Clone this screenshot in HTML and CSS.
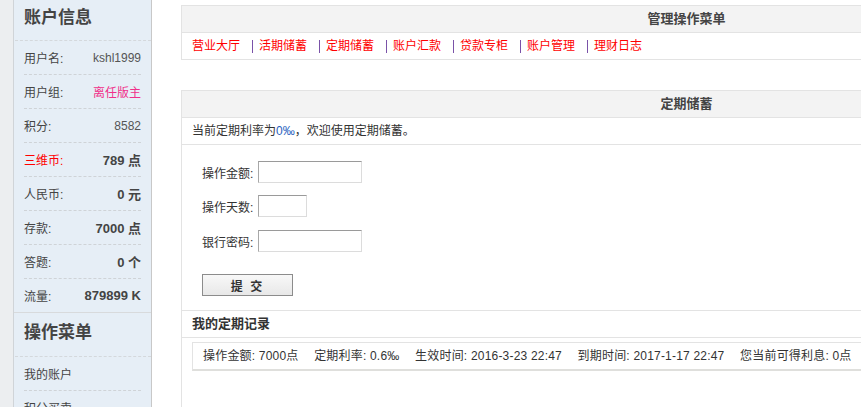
FILE: index.html
```html
<!DOCTYPE html>
<html lang="zh-CN">
<head>
    <meta charset="UTF-8">
    <title>定期储蓄</title>
    <link rel="stylesheet" href="styles.css">
</head>
<body>
    <div class="page">
        <div class="strip"></div>

        <aside class="sidebar">
            <div class="section">
                <h3>账户信息</h3>
                <ul class="info">
                    <li><span>用户名:</span><span class="val">kshl1999</span></li>
                    <li><span>用户组:</span><span class="val pink">离任版主</span></li>
                    <li><span>积分:</span><span class="val">8582</span></li>
                    <li><span class="red">三维币:</span><b>789 点</b></li>
                    <li><span>人民币:</span><b>0 元</b></li>
                    <li><span>存款:</span><b>7000 点</b></li>
                    <li><span>答题:</span><b>0 个</b></li>
                    <li><span>流量:</span><b>879899 K</b></li>
                </ul>
            </div>
            <div class="section second">
                <h3>操作菜单</h3>
                <ul class="info menu">
                    <li><span>我的账户</span></li>
                    <li><span>积分买卖</span></li>
                </ul>
            </div>
        </aside>

        <main class="main">
            <div class="box">
                <div class="box-head">管理操作菜单</div>
                <div class="nav">
                    <a href="#">营业大厅</a>
                    <a href="#" class="sep">活期储蓄</a>
                    <a href="#" class="sep">定期储蓄</a>
                    <a href="#" class="sep">账户汇款</a>
                    <a href="#" class="sep">贷款专柜</a>
                    <a href="#" class="sep">账户管理</a>
                    <a href="#" class="sep">理财日志</a>
                </div>
            </div>

            <div class="box second-box">
                <div class="box-head">定期储蓄</div>
                <div class="row">当前定期利率为<span class="blue">0‰</span>，欢迎使用定期储蓄。</div>
                <form class="deposit-form">
                    <label>操作金额: <input type="text" class="wide"></label>
                    <label>操作天数: <input type="text" class="short"></label>
                    <label>银行密码: <input type="password" class="wide"></label>
                    <button type="button">提 交</button>
                </form>
                <div class="row title">我的定期记录</div>
                <div class="record-area">
                    <div class="record">
                        <span>操作金额: 7000点</span>
                        <span>定期利率: 0.6‰</span>
                        <span>生效时间: 2016-3-23 22:47</span>
                        <span>到期时间: 2017-1-17 22:47</span>
                        <span>您当前可得利息: 0点</span>
                    </div>
                </div>
            </div>
        </main>
    </div>
</body>
</html>
```

FILE: styles.css
```css
html, body {
    margin: 0;
    padding: 0;
    overflow: hidden;
    background-color: #ffffff;
}

body {
    font-family: 'Liberation Sans', 'Noto Sans CJK SC', sans-serif;
    font-size: 12px;
    color: #444;
}

.page {
    display: flex;
    align-items: flex-start;
    width: 1300px;
    height: 407px;
}

.strip {
    width: 13px;
    height: 100%;
    background-color: #eceef0;
    flex-shrink: 0;
}

.sidebar {
    width: 137px;
    height: 100%;
    background-color: #e6eef6;
    border-left: 1px solid #d0d4d8;
    border-right: 1px solid #c8c8c8;
    flex-shrink: 0;
}

.sidebar h3 {
    margin: 0 0 0 1px;
    padding: 1px 0 5px 9px;
    line-height: 34px;
    font-size: 17px;
    font-weight: bold;
    color: #444;
    border-bottom: 1px dashed #d4d8dc;
}

.section {
    border-bottom: 1px solid #d8dadc;
}

.second h3 {
    padding-top: 3px;
    padding-bottom: 6px;
}

.second {
    border-bottom: none;
}

.info {
    list-style: none;
    margin: 0;
    padding: 0;
}

.info li {
    display: flex;
    justify-content: space-between;
    align-items: center;
    margin: 0 10px;
    height: 33px;
    border-bottom: 1px dashed #cfd3d7;
}

.info li:last-child {
    border-bottom: none;
}

.menu li:last-child {
    border-bottom: 1px dashed #cfd3d7;
}

.info .val {
    color: #555;
}

.info b {
    font-size: 13px;
    color: #444;
}

.pink {
    color: #f0308a !important;
}

.red {
    color: #ff0000;
}

.main {
    padding: 5px 0 0 29px;
    width: 1010px;
}

.box {
    border: 1px solid #e3e3e3;
    border-right: none;
}

.second-box {
    margin-top: 30px;
}

.box-head {
    height: 26px;
    line-height: 26px;
    text-align: center;
    background-color: #f3f3f3;
    border-bottom: 1px solid #e3e3e3;
    font-size: 13px;
    font-weight: bold;
    color: #444;
}

.nav {
    display: flex;
    align-items: center;
    height: 26px;
    padding-left: 10px;
}

.nav a {
    color: #ff0000;
    text-decoration: none;
    line-height: 13px;
}

.nav a.sep {
    margin-left: 12px;
    padding-left: 6px;
    border-left: 1px solid #7a52a8;
}

.row {
    height: 26px;
    line-height: 26px;
    padding-left: 10px;
    border-bottom: 1px solid #e3e3e3;
    color: #333;
}

.blue {
    color: #2a62c0;
}

.deposit-form {
    display: flex;
    flex-direction: column;
    align-items: flex-start;
    padding: 16px 0 14px 20px;
    border-bottom: 1px solid #e3e3e3;
}

.deposit-form label {
    display: flex;
    align-items: center;
    height: 22px;
    margin-bottom: 12px;
    color: #333;
}

.deposit-form label:nth-child(2) {
    margin-bottom: 13px;
}

.deposit-form input {
    box-sizing: border-box;
    height: 22px;
    margin: 0 0 0 5px;
    padding: 1px 3px;
    border: 1px solid #dcdcdc;
    border-top-color: #9a9a9a;
    border-left-color: #a8a8a8;
    background: #fff;
    font-size: 12px;
}

.deposit-form input.wide {
    width: 104px;
}

.deposit-form input.short {
    width: 49px;
}

.deposit-form button {
    margin-top: 10px;
    width: 91px;
    height: 22px;
    border: 1px solid #8c8c8c;
    background: linear-gradient(#f8f8f8, #e8e8e8);
    font-family: 'Liberation Sans', 'Noto Sans CJK SC', sans-serif;
    font-size: 12px;
    font-weight: bold;
    color: #333;
    letter-spacing: 2px;
    cursor: pointer;
}

.title {
    font-size: 13px;
    font-weight: bold;
    color: #333;
}

.record-area {
    height: 67px;
    padding: 4px 0 0 10px;
}

.record {
    height: 26px;
    line-height: 26px;
    padding-left: 10px;
    border: 1px solid #e3e3e3;
    border-bottom: 2px solid #dfdfdc;
    border-right: none;
    color: #333;
    letter-spacing: 0.2px;
}

.record span {
    margin-right: 12px;
}
```
